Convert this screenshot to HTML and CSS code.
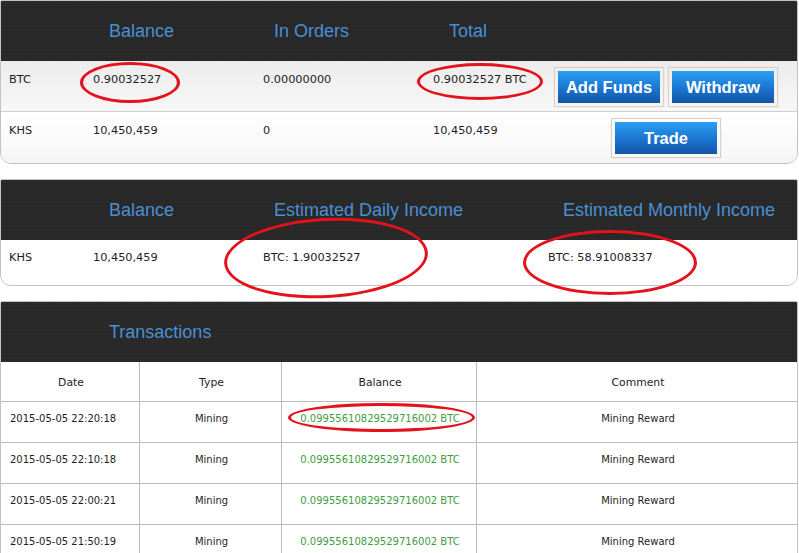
FILE: index.html
```html
<!DOCTYPE html>
<html>
<head>
<meta charset="utf-8">
<link rel="stylesheet" href="styles.css">
</head>
<body>
<div class="page">
  <section class="panel">
    <div class="head head-balances">
      <span></span><span>Balance</span><span>In Orders</span><span>Total</span>
    </div>
    <div class="row row-bal row-first">
      <span>BTC</span><span>0.90032527</span><span>0.00000000</span><span>0.90032527 BTC</span>
      <span class="btns"><button class="btn">Add Funds</button><button class="btn">Withdraw</button></span>
    </div>
    <div class="row row-bal row-second">
      <span>KHS</span><span>10,450,459</span><span>0</span><span>10,450,459</span>
      <span class="btns"><button class="btn">Trade</button></span>
    </div>
  </section>

  <section class="panel">
    <div class="head head-income">
      <span></span><span>Balance</span><span>Estimated Daily Income</span><span>Estimated Monthly Income</span>
    </div>
    <div class="row row-income">
      <span>KHS</span><span>10,450,459</span><span>BTC: 1.90032527</span><span>BTC: 58.91008337</span>
    </div>
  </section>

  <section class="panel panel-tx">
    <div class="head head-tx"><span>Transactions</span></div>
    <div class="tx-row tx-head">
      <span>Date</span><span>Type</span><span>Balance</span><span>Comment</span>
    </div>
    <div class="tx-row">
      <span class="date">2015-05-05 22:20:18</span><span>Mining</span><span class="green">0.09955610829529716002 BTC</span><span>Mining Reward</span>
    </div>
    <div class="tx-row">
      <span class="date">2015-05-05 22:10:18</span><span>Mining</span><span class="green">0.09955610829529716002 BTC</span><span>Mining Reward</span>
    </div>
    <div class="tx-row">
      <span class="date">2015-05-05 22:00:21</span><span>Mining</span><span class="green">0.09955610829529716002 BTC</span><span>Mining Reward</span>
    </div>
    <div class="tx-row">
      <span class="date">2015-05-05 21:50:19</span><span>Mining</span><span class="green">0.09955610829529716002 BTC</span><span>Mining Reward</span>
    </div>
  </section>

  <div class="mark mark-1"></div>
  <div class="mark mark-2"></div>
  <div class="mark mark-3"></div>
  <div class="mark mark-4"></div>
  <div class="mark mark-5"></div>
</div>
</body>
</html>
```

FILE: styles.css
```css
html, body {
  margin: 0;
  padding: 0;
  background: #ffffff;
}
body {
  font-family: "DejaVu Sans", Verdana, sans-serif;
  color: #1e1e1e;
  overflow: hidden;
}
.page {
  position: relative;
  width: 799px;
  height: 553px;
  overflow: hidden;
}
.panel {
  box-sizing: border-box;
  width: 798px;
  border: 1px solid #c2c2c2;
  border-radius: 2px 2px 11px 11px;
  overflow: hidden;
  margin-bottom: 15px;
  background: #ffffff;
}
.head {
  height: 60px;
  display: grid;
  align-items: center;
  background-color: #282828;
  background-image: radial-gradient(circle, #323232 0.8px, transparent 1px);
  background-size: 3px 3px;
  font-family: "Liberation Sans", Arial, sans-serif;
  font-size: 18px;
  color: #4a8fd4;
}
.head span { padding-top: 1px; }
.head-balances { grid-template-columns: 108px 165px 175px 1fr; }
.head-income { grid-template-columns: 108px 165px 289px 1fr; }
.head-tx { grid-template-columns: 1fr; padding-left: 108px; }

.row {
  display: grid;
  align-items: start;
  font-size: 11.3px;
  line-height: 13px;
}
.row > span { padding-left: 8px; }
.row-bal {
  grid-template-columns: 84px 170px 170px 122px 238px;
  height: 51px;
  box-sizing: border-box;
  padding-top: 12px;
}
.row-first {
  background: linear-gradient(#ececec, #f7f7f7);
  border-bottom: 1px solid #cfcfcf;
}
.row-second {
  background: linear-gradient(#ffffff, #f5f5f5);
  height: 51px;
}
.row-bal .btns {
  display: flex;
  justify-content: center;
  gap: 4px;
  margin-top: -6px;
  padding-left: 0;
}
.row-income {
  grid-template-columns: 84px 170px 285px 1fr;
  height: 45px;
  box-sizing: border-box;
  padding-top: 11px;
  background: #ffffff;
}

.btn {
  box-sizing: border-box;
  width: 110px;
  height: 40px;
  padding: 3px;
  border: 1px solid #dccfc3;
  background: #f8f8f8;
  box-shadow: 0 0 1px rgba(200, 170, 140, 0.4);
  font-family: "Liberation Sans", Arial, sans-serif;
  font-weight: bold;
  font-size: 16.5px;
  color: #ffffff;
  background-clip: padding-box;
  position: relative;
  cursor: pointer;
}
.btn {
  background-image: linear-gradient(#2ba0f4, #1a74d0 55%, #1554a6);
  background-origin: content-box;
  background-clip: content-box;
  background-color: #f8f8f8;
}

.tx-row {
  display: grid;
  grid-template-columns: 139px 142px 195px 1fr;
  height: 41px;
  box-sizing: border-box;
  border-bottom: 1px solid #bdbdbd;
  font-size: 10px;
  line-height: 13px;
}
.tx-row > span {
  box-sizing: border-box;
  border-right: 1px solid #bdbdbd;
  text-align: center;
  padding-top: 10px;
  padding-left: 2px;
}
.tx-row > span:last-child { border-right: none; }
.tx-row > span.date { text-align: left; padding-left: 9px; }
.tx-head {
  height: 40px;
  font-size: 10.8px;
}
.tx-head > span { padding-top: 14px; }
.green { color: #3f9d3f; }

.mark {
  position: absolute;
  box-sizing: border-box;
  border: 3px solid #e3121b;
  border-radius: 50%;
}
.mark-1 { left: 80px; top: 62px; width: 100px; height: 41px; }
.mark-2 { left: 417px; top: 63px; width: 126px; height: 37px; }
.mark-3 { left: 224px; top: 218px; width: 204px; height: 80px; transform: rotate(-3deg); }
.mark-4 { left: 523px; top: 230px; width: 174px; height: 65px; }
.mark-5 { left: 288px; top: 403px; width: 187px; height: 29px; }
```
